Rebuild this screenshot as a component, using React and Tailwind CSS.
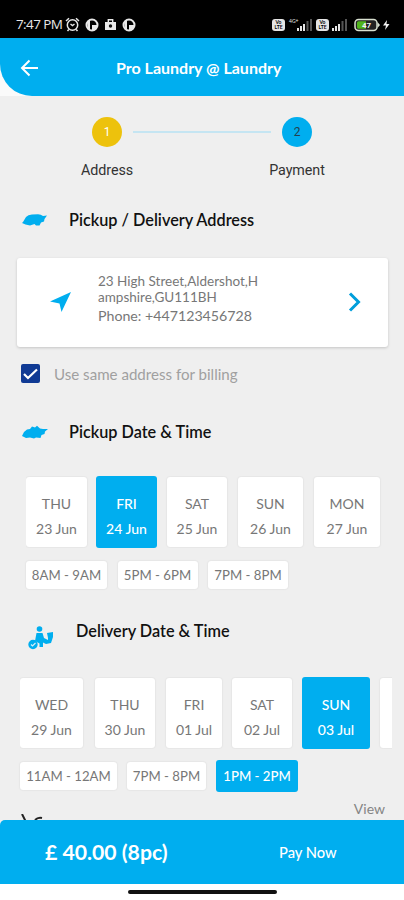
import { useState } from 'react';
import clsx from 'clsx';

const pickupDays = [
  { day: 'THU', date: '23 Jun', size: 'w-[61px]' },
  { day: 'FRI', date: '24 Jun', size: 'w-[61px] ml-[9px]' },
  { day: 'SAT', date: '25 Jun', size: 'w-[60px] ml-[10px]' },
  { day: 'SUN', date: '26 Jun', size: 'w-[65px] ml-[11px]' },
  { day: 'MON', date: '27 Jun', size: 'w-[66px] ml-[11px]' },
];

const deliveryDays = [
  { day: 'WED', date: '29 Jun', size: 'w-[63px]' },
  { day: 'THU', date: '30 Jun', size: 'w-[60px] ml-3' },
  { day: 'FRI', date: '01 Jul', size: 'w-[56px] ml-[11px]' },
  { day: 'SAT', date: '02 Jul', size: 'w-[60px] ml-[10px]' },
  { day: 'SUN', date: '03 Jul', size: 'w-[68px] ml-[10px]' },
];

const pickupSlots = [
  { label: '8AM - 9AM', size: 'w-[81px]' },
  { label: '5PM - 6PM', size: 'w-[80px]' },
  { label: '7PM - 8PM', size: 'w-[80px]' },
];

const deliverySlots = [
  { label: '11AM - 12AM', size: 'w-[97px]' },
  { label: '7PM - 8PM', size: 'w-[79px]' },
  { label: '1PM - 2PM', size: 'w-[82px]' },
];

function Signal() {
  return (
    <svg width="16" height="12" viewBox="0 0 16 12" fill="#e5e5e5">
      <rect x="0" y="9" width="2" height="3" />
      <rect x="3" y="7" width="2" height="5" />
      <rect x="6" y="5" width="2" height="7" />
      <rect x="9.500" y="2" width="2" height="10" fill="#555" />
      <rect x="13" y="0" width="2" height="12" fill="#555" />
    </svg>
  );
}

function SimBadge() {
  return (
    <div className="w-[13px] h-3 rounded-[3px] bg-[#e5e5e5] flex flex-col items-center justify-center text-black font-bold text-[5px] leading-[5px]">
      <span>Vo</span>
      <span>LTE</span>
    </div>
  );
}

function AppDot() {
  return (
    <svg width="14" height="14" viewBox="0 0 14 14">
      <circle cx="7" cy="7" r="5.500" fill="none" stroke="#e8e8e8" strokeWidth="2" />
      <path d="M7 7h5.500A5.500 5.500 0 0 1 7 12.500z" fill="#e8e8e8" />
      <path d="M2 3h3v8H3z" fill="#e8e8e8" />
    </svg>
  );
}

function StatusBar() {
  return (
    <div className="h-[38px] bg-black flex items-center pt-[11px] pl-4 pr-[13px] text-[#e8e8e8]">
      <span className="w-[47px] font-['Open_Sans',sans-serif] text-[13.5px] font-medium tracking-[-0.6px] whitespace-nowrap">7:47 PM</span>
      <div className="ml-[2px] flex items-center gap-[5px]">
        <svg width="15" height="15" viewBox="0 0 15 15" fill="none" stroke="#e8e8e8" strokeWidth="1.500">
          <circle cx="7.500" cy="8" r="5.200" />
          <path d="M1 4l3-2.700M14 4l-3-2.700M5.500 7l2 1.500 2-1.500M3.800 12.500l-1.300 1.500M11.200 12.500l1.300 1.500" />
        </svg>
        <AppDot />
        <svg width="13" height="13" viewBox="0 0 13 13">
          <path d="M1 4h11v8H1z" fill="#e8e8e8" />
          <path d="M4.300 4V1.700h4.400V4" fill="none" stroke="#e8e8e8" strokeWidth="1.400" />
          <circle cx="6.500" cy="8" r="1.700" fill="#111" />
        </svg>
        <AppDot />
      </div>
      <div className="ml-auto flex items-center">
        <SimBadge />
        <div className="ml-[4px] mr-[-4px] w-3 h-3 text-[5px] leading-[5px]">4G+</div>
        <Signal />
        <div className="ml-[3px] mr-[3px]"><SimBadge /></div>
        <Signal />
        <svg className="ml-[6px] mr-px" width="36" height="14" viewBox="0 0 36 14">
          <rect x="1" y="1.500" width="22" height="11" rx="3.500" fill="#222" stroke="#d8e0d0" strokeWidth="1.500" />
          <path d="M4.500 3.200H12v7.600H4.500a1.500 1.500 0 0 1-1.500-1.500V4.700a1.500 1.500 0 0 1 1.500-1.500z" fill="#4fb51c" />
          <path d="M23.500 4l2.500 3-2.500 3z" fill="#d8e0d0" />
          <text x="8" y="10" fontSize="8" fontWeight="bold" fill="#f2f2f2" fontFamily="Roboto, sans-serif">47</text>
          <path d="M33 2l-4 5.500h3L31 12l4.500-6h-3z" fill="#f2f2f2" />
        </svg>
      </div>
    </div>
  );
}

function Header() {
  return (
    <div className="bg-[#fafafa]">
      <div className="h-[58px] bg-[#00aeef] rounded-bl-[32px] flex items-center pt-px">
        <svg className="ml-5" width="19" height="18" viewBox="0 0 19 18" fill="none" stroke="white" strokeWidth="2">
          <path d="M18 9H3M9.500 1.500L2 9l7.500 7.500" />
        </svg>
        <h1 className="ml-[77px] text-white font-bold text-[16px]">Pro Laundry @ Laundry</h1>
      </div>
    </div>
  );
}

function Step({ number, label, color }) {
  return (
    <div className="w-[60px] flex flex-col items-center">
      <div className={clsx('size-[30px] rounded-full flex items-center justify-center text-[12px] font-[Roboto,sans-serif]', color)}>{number}</div>
      <span className="mt-[13px] text-[14.3px] leading-5 text-[#333] font-[Roboto,sans-serif] tracking-[-0.05px]">{label}</span>
    </div>
  );
}

function DayRow({ days, selected, onSelect, children }) {
  return (
    <div className="flex items-center h-[72px] overflow-hidden">
      {days.map((d) => (
        <button
          key={d.date}
          onClick={() => onSelect(d.date)}
          className={clsx(
            'shrink-0 rounded-[3px] flex flex-col items-center justify-center gap-[5px] pt-[9px] text-[14px] leading-5 whitespace-nowrap',
            d.size,
            selected === d.date ? 'h-[72px] bg-[#00aeef] text-white font-medium' : 'h-[70px] bg-white text-[#777] shadow-[0_0_2px_rgba(0,0,0,0.12)]'
          )}
        >
          <span>{d.day}</span>
          <span>{d.date}</span>
        </button>
      ))}
      {children}
    </div>
  );
}

function SlotRow({ slots, selected, onSelect, gap }) {
  return (
    <div className={clsx('flex items-center h-8', gap)}>
      {slots.map((s) => (
        <button
          key={s.label}
          onClick={() => onSelect(s.label)}
          className={clsx(
            'rounded-[3px] pt-[2px] text-[13.2px] whitespace-nowrap',
            s.size,
            selected === s.label ? 'h-8 bg-[#00aeef] text-white font-medium' : 'h-[28px] bg-white text-[#777] shadow-[0_0_2px_rgba(0,0,0,0.12)]'
          )}
        >
          {s.label}
        </button>
      ))}
    </div>
  );
}

export default function App() {
  const [sameAddress, setSameAddress] = useState(true);
  const [pickupDay, setPickupDay] = useState('24 Jun');
  const [pickupSlot, setPickupSlot] = useState('');
  const [deliveryDay, setDeliveryDay] = useState('03 Jul');
  const [deliverySlot, setDeliverySlot] = useState('1PM - 2PM');

  return (
    <div className="w-[404px] h-[900px] overflow-hidden flex flex-col bg-[#efefef] font-[Lato,sans-serif]">
      <StatusBar />
      <Header />

      <main className="h-[724px] overflow-hidden">
        <div className="flex pt-[21px] pl-[77px]">
          <Step number="1" label="Address" color="bg-[#edc20c] text-white" />
          <div className="mt-[14px] mx-[-4px] w-[138px] h-[2px] bg-[#c5e5f2]" />
          <Step number="2" label="Payment" color="bg-[#00aeef] text-[#24404e]" />
        </div>

        <div className="mt-[29px] h-[22px] flex items-center pl-[22px]">
          <svg width="25" height="14" viewBox="0 0 25 14" fill="#00aeef">
            <path d="M1 9L4 4Q6 1.500 10 1.500L16 1.300Q19 1.300 21 3L25 2.500L22.500 6L22 8.500L19 9.500L17.500 12.500H14L12.500 11L8 12.500L3.500 11.500L0 10Z" />
          </svg>
          <h2 className="ml-[22px] text-[16.25px] font-semibold text-[#111]">Pickup / Delivery Address</h2>
        </div>

        <div className="mt-[27px] ml-[17px] w-[371px] h-[89px] rounded-[3px] bg-white shadow-[0_1px_3px_rgba(0,0,0,0.18)] flex items-center">
          <svg className="ml-[33px] mb-[2px]" width="22" height="20" viewBox="0 0 22 20" fill="#00aeef">
            <path d="M21 0L0 9.500L9.500 11.500L11.500 20Z" />
          </svg>
          <div className="ml-[26px] w-[180px] pb-[8px] text-[#777]">
            <p className="text-[13.5px] leading-[16px]">23 High Street,Aldershot,H<br />ampshire,GU111BH</p>
            <p className="mt-[3px] text-[14.2px] leading-[16px]">Phone: +447123456728</p>
          </div>
          <svg className="ml-[70px] mb-[2px]" width="14" height="20" viewBox="0 0 14 20" fill="none" stroke="#009edb" strokeWidth="3">
            <path d="M2 1.500L10.500 10L2 18.500" />
          </svg>
        </div>

        <button onClick={() => setSameAddress(!sameAddress)} className="mt-[17px] ml-[21px] h-[19px] flex items-center">
          <div className="size-[19px] rounded-[2px] bg-[#103a94] flex items-center justify-center">
            {sameAddress && (
              <svg width="15" height="12" viewBox="0 0 15 12" fill="none" stroke="white" strokeWidth="2.200">
                <path d="M1 6l4 4L14 1.500" />
              </svg>
            )}
          </div>
          <span className="ml-[14px] pt-[2px] text-[15.1px] text-[#a0a0a0]">Use same address for billing</span>
        </button>

        <div className="mt-[38px] h-[22px] flex items-center pl-[22px]">
          <svg width="26" height="15" viewBox="0 0 26 15" fill="#00aeef">
            <path d="M0 11L2 7L5 4.500L8 4L10 1.500L13 2.500L15 0.800L18 3.500L21 4L26 4L23 6.500L22.500 9L19.500 10L18.500 13L14 12.500L12 13.500L8 12.500L4 13Z" />
          </svg>
          <h2 className="ml-[21px] text-[16.25px] font-semibold text-[#111]">Pickup Date &amp; Time</h2>
        </div>

        <div className="mt-[33px] pl-[26px]">
          <DayRow days={pickupDays} selected={pickupDay} onSelect={setPickupDay} />
        </div>
        <div className="mt-[11px] pl-[26px]">
          <SlotRow slots={pickupSlots} selected={pickupSlot} onSelect={setPickupSlot} gap="gap-[10.5px]" />
        </div>

        <div className="mt-[28px] h-[24px] flex pl-[28px]">
          <svg className="mt-[7px]" width="26" height="25" viewBox="0 0 26 25" fill="#00aeef">
            <circle cx="11.500" cy="3" r="2.800" />
            <path d="M8.500 7h6l1.500 5 4 2v-2l-1-5 6-1v5l-2 6-5 1-3-1.500V21h-3.500v-3.500L7 15z" />
            <circle cx="5" cy="18.500" r="3.600" fill="#00aeef" stroke="#00aeef" strokeWidth="2.200" />
            <path d="M3 18.500l1.500 1.500 3-3" fill="none" stroke="#d8eef7" strokeWidth="1.200" />
          </svg>
          <h2 className="ml-[22px] text-[16.25px] leading-6 font-semibold text-[#111]">Delivery Date &amp; Time</h2>
        </div>

        <div className="mt-[34px] ml-5 w-[372px]">
          <DayRow days={deliveryDays} selected={deliveryDay} onSelect={setDeliveryDay}>
            <div className="shrink-0 ml-[10px] w-4 h-[70px] rounded-l-[3px] bg-white shadow-[0_0_2px_rgba(0,0,0,0.12)]" />
          </DayRow>
        </div>
        <div className="mt-[11px] pl-5">
          <SlotRow slots={deliverySlots} selected={deliverySlot} onSelect={setDeliverySlot} gap="gap-[10px]" />
        </div>

        <div className="mt-[7px] flex justify-between pl-[21px] pr-[19px]">
          <svg className="mt-[15px]" width="22" height="16" viewBox="0 0 22 16" fill="none" stroke="#222" strokeWidth="2">
            <path d="M1 0l4 8M14 6q3-3 7-2" />
          </svg>
          <span className="text-[14px] leading-5 text-[#858585]">View</span>
        </div>
      </main>

      <footer className="h-[64px] bg-[#00aeef] rounded-tl-[5px] flex items-center pt-px text-white">
        <span className="ml-[45px] w-[234px] text-[21.2px] font-bold">£ 40.00 (8pc)</span>
        <button className="text-[14.7px] font-medium">Pay Now</button>
      </footer>
      <div className="h-4 bg-white flex justify-center pt-[6px]">
        <div className="w-[149px] h-[4px] rounded-full bg-[#111]" />
      </div>
    </div>
  );
}
